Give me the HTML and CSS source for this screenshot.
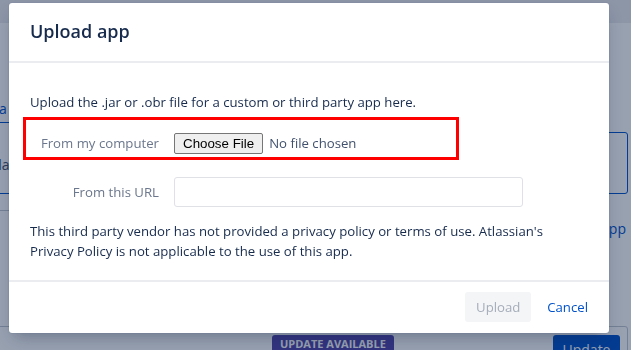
FILE: index.html
```html
<!DOCTYPE html>
<html>
<head>
<meta charset="utf-8">
<link rel="stylesheet" href="styles.css">
</head>
<body>
<div class="page">
  <div class="topbar"></div>
  <div class="page-content">
    <div class="row-a"><span class="link">Data</span></div>
    <div class="row-b">
      <div class="card"><span class="card-text">Available</span></div>
      <div class="search-box"></div>
    </div>
    <div class="row-c">
      <div class="row-c-left"></div>
      <div class="row-c-right"><span class="link">App</span></div>
    </div>
    <div class="row-d">
      <span class="badge">UPDATE AVAILABLE</span>
      <span class="update-btn">Update</span>
    </div>
  </div>
</div>
<div class="blanket"></div>
<div class="dialog">
  <div class="dialog-header">
    <h2 class="dialog-title">Upload app</h2>
  </div>
  <div class="dialog-body">
    <p class="intro">Upload the .jar or .obr file for a custom or third party app here.</p>
    <div class="field-row highlighted">
      <label class="field-label">From my computer</label>
      <input class="file-input" type="file">
    </div>
    <div class="field-row">
      <label class="field-label">From this URL</label>
      <input class="text-input" type="text">
    </div>
    <p class="privacy">This third party vendor has not provided a privacy policy or terms of use. Atlassian's Privacy Policy is not applicable to the use of this app.</p>
  </div>
  <div class="dialog-footer">
    <button class="btn-upload" disabled>Upload</button>
    <button class="btn-cancel">Cancel</button>
  </div>
</div>
</body>
</html>
```

FILE: styles.css
```css
* { box-sizing: border-box; }
html, body { margin: 0; padding: 0; }
body {
  width: 631px;
  height: 350px;
  overflow: hidden;
  background: #ffffff;
  font-family: "Open Sans", "Noto Sans", sans-serif;
  font-size: 13.2px;
  color: #172b4d;
}

/* background page */
.page { width: 631px; height: 350px; overflow: hidden; }
.topbar { height: 24px; background: #ebecf0; border-bottom: 1px solid #ffffff; }
.page-content { padding-right: 3px; }
.link { color: #0052cc; font-size: 14px; line-height: 20px; }
.row-a { height: 98px; padding-top: 75px; padding-left: 3px; }
.row-a .link { margin-left: -27px; }
.row-b { display: flex; height: 72px; gap: 20px; }
.card {
  flex: 1;
  margin-left: -10px;
  border: 1px solid #0052cc;
  border-radius: 3px;
  padding: 32px 0 0 0;
}
.card-text { color: #42526e; font-size: 14px; margin-left: -20px; }
.search-box {
  width: 60px;
  margin-top: 10px;
  border: 1px solid #0052cc;
  border-radius: 3px;
}
.row-c { display: flex; height: 132px; }
.row-c-left { flex: 1; border-top: 1px solid #c1c7d0; margin-top: 16px; }
.row-c-right { width: 60px; padding-top: 25px; text-align: right; padding-right: 2px; }
.row-d {
  display: flex;
  align-items: flex-start;
  border: 1px solid #c1c7d0;
  border-radius: 3px;
  height: 40px;
  margin-left: -10px;
  padding: 8px 7px 0 281px;
}
.badge {
  background: #5243aa;
  color: #ffffff;
  font-size: 11px;
  font-weight: 700;
  padding: 1px 8px;
  border-radius: 3px;
  line-height: 16px;
}
.update-btn {
  margin-left: auto;
  background: #0052cc;
  color: #ffffff;
  font-size: 14px;
  border-radius: 3px;
  width: 67px;
  height: 30px;
  text-align: center;
  line-height: 30px;
}

/* blanket */
.blanket {
  position: fixed;
  inset: 0;
  background: rgba(9, 30, 66, 0.42);
}

/* dialog */
.dialog {
  position: fixed;
  left: 9px;
  top: 3px;
  width: 600px;
  background: #ffffff;
  border-radius: 3px;
  box-shadow: 0 8px 16px -4px rgba(9, 30, 66, 0.3), 0 0 1px rgba(9, 30, 66, 0.3);
  display: flex;
  flex-direction: column;
}
.dialog-header {
  height: 60px;
  padding: 0 21px;
  border-bottom: 2px solid #ebecf0;
  display: flex;
  align-items: center;
}
.dialog-title {
  margin: 0;
  font-size: 18px;
  font-weight: 600;
  color: #172b4d;
  line-height: 24px;
  padding-bottom: 2px;
}
.dialog-body {
  padding: 29px 21px 19px 21px;
  display: flex;
  flex-direction: column;
}
.intro { margin: 0; line-height: 20px; }
.field-row {
  display: grid;
  grid-template-columns: 129px 1fr;
  column-gap: 15px;
  align-items: center;
}
.highlighted {
  width: 436px;
  margin: 5px 0 17px -7px;
  border: 3px solid #ff0000;
  padding: 9px 0 0 4px;
  height: 43px;
}
.field-label {
  text-align: right;
  color: #6b778c;
  font-size: 13.2px;
}
.file-input {
  font-family: "Open Sans", "Noto Sans", sans-serif;
  font-size: 13.2px;
  color: #42526e;
}
.file-input::file-selector-button {
  font-family: "Liberation Sans", Arial, sans-serif;
  font-size: 13.33px;
  color: #000000;
  background: #efefef;
  border: 1px solid #767676;
  border-radius: 2px;
  padding: 1px 8px;
  height: 21px;
  margin-right: 6px;
}
.text-input {
  width: 349px;
  height: 30px;
  border: 1px solid #dfe1e6;
  border-radius: 3px;
  background: #ffffff;
  font-family: inherit;
}
.privacy { margin: 14px 0 0 0; line-height: 20px; padding-right: 10px; }
.dialog-footer {
  border-top: 2px solid #ebecf0;
  padding: 10px 21px 11px 21px;
  display: flex;
  justify-content: flex-end;
  align-items: center;
  gap: 16px;
}
.btn-upload {
  font-family: inherit;
  font-size: 13.2px;
  height: 30px;
  width: 66px;
  border: none;
  border-radius: 3px;
  background: #f4f5f7;
  color: #a5adba;
}
.btn-cancel {
  font-family: inherit;
  font-size: 13.2px;
  border: none;
  background: none;
  color: #0052cc;
  padding: 0;
}
```
